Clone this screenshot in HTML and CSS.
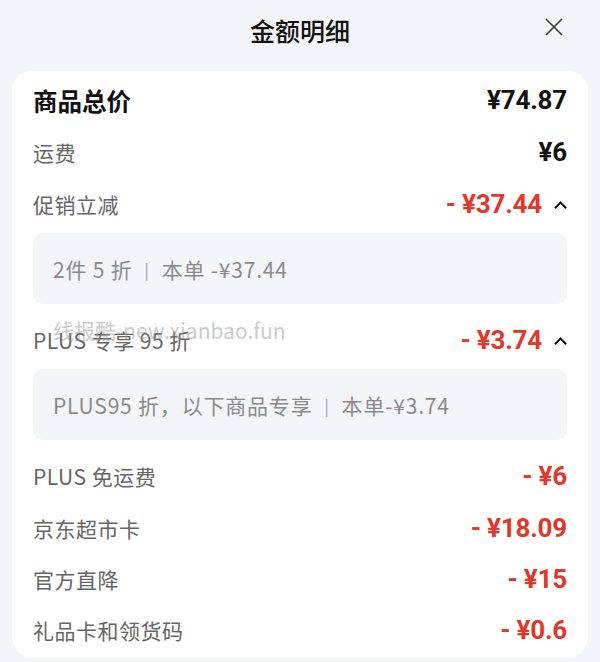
FILE: index.html
```html
<!DOCTYPE html>
<html lang="zh-CN">
<head>
    <meta charset="UTF-8">
    <meta name="viewport" content="width=device-width, initial-scale=1.0">
    <title>金额明细</title>
    <link rel="stylesheet" href="styles.css">
</head>
<body>

<div class="sheet">
    <div class="header">
        <h1>金额明细</h1>
        <span class="close">
            <svg width="20" height="20" viewBox="0 0 20 20"><path d="M2 2 L18 18 M18 2 L2 18" stroke="#3a3a3a" stroke-width="1.6" fill="none"/></svg>
        </span>
    </div>

    <div class="card">
        <div class="row total">
            <span class="label">商品总价</span>
            <span class="value">¥74.87</span>
        </div>
        <div class="row">
            <span class="label">运费</span>
            <span class="value">¥6</span>
        </div>
        <div class="row">
            <span class="label">促销立减</span>
            <span class="value red">- ¥37.44<i class="arrow"></i></span>
        </div>
        <div class="detail">2件 5 折 <span class="bar">|</span> 本单 -¥37.44</div>

        <div class="row after-detail">
            <span class="label">PLUS 专享 95 折</span>
            <span class="value red">- ¥3.74<i class="arrow"></i></span>
        </div>
        <div class="detail">PLUS95 折，以下商品专享 <span class="bar">|</span> 本单-¥3.74</div>

        <div class="row after-detail">
            <span class="label">PLUS 免运费</span>
            <span class="value red">- ¥6</span>
        </div>
        <div class="row short">
            <span class="label">京东超市卡</span>
            <span class="value red">- ¥18.09</span>
        </div>
        <div class="row short">
            <span class="label">官方直降</span>
            <span class="value red">- ¥15</span>
        </div>
        <div class="row short">
            <span class="label">礼品卡和领货码</span>
            <span class="value red">- ¥0.6</span>
        </div>
    </div>

    <div class="watermark">线报酷-new.xianbao.fun</div>
</div>

</body>
</html>
```

FILE: styles.css
```css
body {
    margin: 0;
    background-color: #f4f5f9;
    font-family: "Noto Sans CJK SC", "Noto Sans", sans-serif;
    color: #1a1a1a;
}
.sheet {
    position: relative;
    width: 600px;
    height: 662px;
    overflow: hidden;
}
.header {
    position: relative;
    height: 60px;
    display: flex;
    justify-content: center;
    align-items: center;
}
.header h1 {
    margin: 0;
    font-size: 25px;
    font-weight: 500;
    color: #111;
}
.close {
    position: absolute;
    right: 36px;
    top: 17px;
    width: 20px;
    height: 20px;
}
.card {
    background: #ffffff;
    margin: 11px 12px 0;
    border-radius: 20px;
    padding: 3px 21px 2px;
}
.row {
    height: 52px;
    display: flex;
    justify-content: space-between;
    align-items: center;
}
.row.short {
    height: 51px;
}
.row.after-detail {
    margin-top: 10px;
}
.label {
    font-size: 21px;
    letter-spacing: 0.5px;
    color: #666;
}
.total .label {
    font-size: 24.5px;
    letter-spacing: 0;
    font-weight: 700;
    color: #111;
}
.value {
    display: flex;
    align-items: center;
    font-family: Roboto, "Noto Sans CJK SC", sans-serif;
    font-size: 26px;
    font-weight: 700;
    color: #111;
    letter-spacing: -0.2px;
}
.value.red {
    color: #e0382b;
}
.arrow {
    display: inline-block;
    width: 7px;
    height: 7px;
    border-left: 2px solid #111;
    border-top: 2px solid #111;
    transform: rotate(45deg);
    margin: 6px 2px 0 14px;
}
.detail {
    background: #f4f5f9;
    border-radius: 10px;
    height: 71px;
    margin-top: 3px;
    padding: 0 20px;
    display: flex;
    align-items: center;
    font-size: 21px;
    letter-spacing: 0.8px;
    color: #8a8a8a;
}
.bar {
    color: #999;
    font-size: 16px;
    margin: 0 12px;
}
.watermark {
    position: absolute;
    left: 53px;
    top: 315px;
    font-size: 21px;
    color: rgba(150, 150, 150, 0.5);
}
```
